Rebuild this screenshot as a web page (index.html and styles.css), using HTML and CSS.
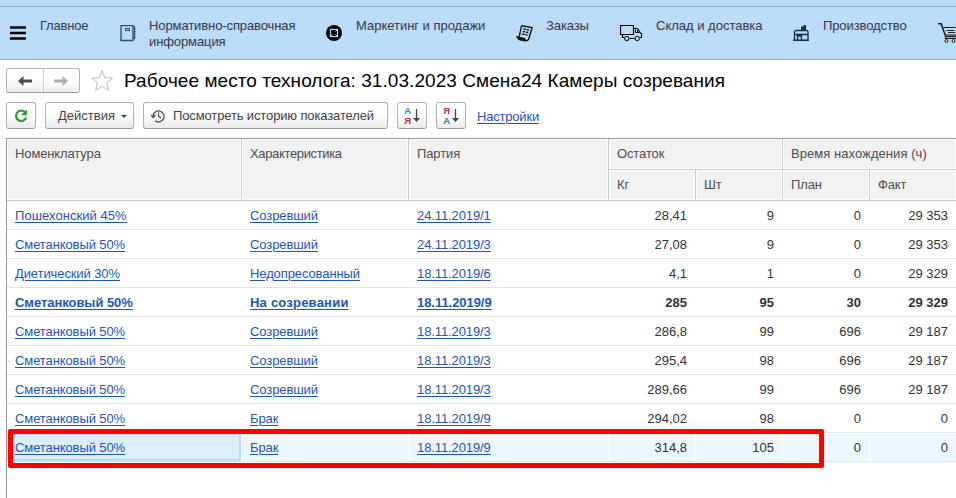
FILE: index.html
```html
<!DOCTYPE html>
<html lang="ru">
<head>
<meta charset="utf-8">
<title>Рабочее место технолога</title>
<link rel="stylesheet" href="styles.css">
</head>
<body>
<div class="strip"></div>
<nav class="sections">
  <svg class="burger" width="16" height="14" viewBox="0 0 16 14"><path d="M0 1.500h16M0 7h16M0 12.500h16" stroke="#000" stroke-width="2.600"/></svg>
  <span class="section s-main">Главное</span>
  <svg class="icon" width="16" height="18" viewBox="0 0 16 18" fill="none" stroke="#34495c"><path d="M1 7.500V15.500h12V7.500M1 8V.500h12V8" stroke-width="1.300"/><rect x="5.500" y="3.500" width="4" height="2"/><path d="M13 1.500h1.500v12.500H13" /><path d="M14.500 3.500h1M14.500 6.500h1M14.500 9.500h1M14.500 12.500h1" stroke-width="1.500"/></svg>
  <span class="section s-ref">Нормативно-справочная<br>информация</span>
  <svg class="icon" width="16" height="16" viewBox="0 0 16 16"><circle cx="8" cy="8" r="8" fill="#000"/><g fill="none" stroke="#badcf9"><rect x="4.500" y="4.500" width="7" height="7" stroke-width="1.200"/><path d="M9.500 6.500l2-2M5 11l1.500-1.500M11 11L9.500 9.500"/></g></svg>
  <span class="section s-sales">Маркетинг и продажи</span>
  <svg class="icon" width="17" height="17" viewBox="0 0 17 17" fill="none" stroke="#111"><path d="M5.500.8l10.700 1.700-3.400 11.200c-.5 1.700-1.700 2.200-3.200 1.700M5.500.8L3.200 11.800" stroke-width="1.400"/><path d="M.5 11.500l8.500 2 .7 2.700-7-1.500z" fill="#111"/><path d="M7.500 4l5.500 1M6.800 6.500l5.400 1M6.200 9l5.300 1" stroke-dasharray="2.500 .7" stroke-width="1.300"/></svg>
  <span class="section s-orders">Заказы</span>
  <svg class="icon" width="23" height="17" viewBox="0 0 23 17" fill="none" stroke="#000"><path d="M.5.500h13v9H.5zM2.500 9.500v3h2M9 13.500h6M13.500 3.500h4l2.500 4 1.500 1v4h-2" stroke-width="1.200"/><path d="M15.500 4.500v3h4M17.500 5v2"/><circle cx="6.800" cy="13.500" r="2.200"/><circle cx="17.200" cy="13.500" r="2.200"/></svg>
  <span class="section s-stock">Склад и доставка</span>
  <svg class="icon" width="16" height="16" viewBox="0 0 16 16" fill="none" stroke="#1c2d3b"><path d="M8 1.500h2.500V0H13v5H8z" fill="#1c2d3b" stroke="none"/><path d="M1.500 6.500L3 5.500h11l1 1v9H1.500zM1 9.500h14M4.500 15v-4h4v4" stroke-width="1.300"/><path d="M0 15.300h16" stroke-width="1.400"/></svg>
  <span class="section s-prod">Производство</span>
  <svg class="icon cart" width="22" height="20" viewBox="0 0 22 20" fill="none" stroke="#222"><path d="M0 .8h3.200l4.500 12.700h12" stroke-width="1.600"/><path d="M5.500 4.500h16L19.500 12H7.500M8.500 7.500h8M10 9.500h7"/><path d="M7.700 13.500L7 15.500h11"/><circle cx="8.500" cy="18" r="1.500"/><circle cx="15.500" cy="18" r="1.500"/></svg>
</nav>

<header class="heading">
  <div class="history">
    <span class="btn-half"><svg width="14" height="10" viewBox="0 0 14 10"><path d="M0 5l5.500-5v3.500H14v3H5.500V10z" fill="#4c4c4c"/></svg></span>
    <span class="btn-half"><svg width="14" height="10" viewBox="0 0 14 10"><path d="M14 5L8.500 0v3.500H0v3h8.500V10z" fill="#adadad"/></svg></span>
  </div>
  <svg class="star" width="24" height="23" viewBox="0 0 24 23"><path d="M12 1.500l2.800 7.300 7.700.3-6 4.900 2.100 7.500L12 17.300l-6.600 4.200L7.500 14l-6-4.900 7.700-.3z" fill="#fff" stroke="#b9bec4"/></svg>
  <h1>Рабочее место технолога: 31.03.2023 Смена24 Камеры созревания</h1>
</header>

<div class="toolbar">
  <button class="btn square"><svg width="14" height="14" viewBox="0 0 14 14"><path d="M10.800 3A5.200 5.200 0 1 0 12.200 8.500" fill="none" stroke="#2c9f36" stroke-width="2.200"/><path d="M13 .3v6H7z" fill="#2c9f36"/></svg></button>
  <button class="btn actions"><span>Действия</span><i class="caret"></i></button>
  <button class="btn log"><svg width="14" height="14" viewBox="0 0 14 14" fill="none" stroke="#4d4d4d" stroke-width="1.300"><path d="M2 7.500A5.500 5.500 0 1 1 4 11.700M7.500 3.500V7l2.500 2.300"/><path d="M0 6l2 2.500L4.300 6"/></svg><span>Посмотреть историю показателей</span></button>
  <button class="btn square"><span class="sort"><span class="letters"><b class="blue">А</b><b class="red">Я</b></span><svg width="7" height="14" viewBox="0 0 7 14"><path d="M3.500 0v10" stroke="#444" stroke-width="1.300"/><path d="M0 9h7l-3.500 4z" fill="#444"/></svg></span></button>
  <button class="btn square"><span class="sort"><span class="letters"><b class="red">Я</b><b class="blue">А</b></span><svg width="7" height="14" viewBox="0 0 7 14"><path d="M3.500 0v10" stroke="#444" stroke-width="1.300"/><path d="M0 9h7l-3.500 4z" fill="#444"/></svg></span></button>
  <a class="settings">Настройки</a>
</div>

<main class="grid">
  <div class="row head">
    <div class="th tall">Номенклатура</div><div class="th tall tight">Характеристика</div><div class="th tall">Партия</div>
    <div class="th wide">Остаток</div><div class="th wide"><span class="time">Время нахождения (ч)</span></div>
    <div class="th">Кг</div><div class="th">Шт</div><div class="th">План</div><div class="th">Факт</div>
  </div>
  <div class="row"><div><a class="wider">Пошехонский 45%</a></div><div><a>Созревший</a></div><div><a>24.11.2019/1</a></div><div>28,41</div><div>9</div><div>0</div><div>29 353</div></div>
  <div class="row"><div><a>Сметанковый 50%</a></div><div><a>Созревший</a></div><div><a>24.11.2019/3</a></div><div>27,08</div><div>9</div><div>0</div><div>29 353</div></div>
  <div class="row"><div><a>Диетический 30%</a></div><div><a>Недопресованный</a></div><div><a>18.11.2019/6</a></div><div>4,1</div><div>1</div><div>0</div><div>29 329</div></div>
  <div class="row bold"><div><a>Сметанковый 50%</a></div><div><a class="loose">На созревании</a></div><div><a>18.11.2019/9</a></div><div>285</div><div>95</div><div>30</div><div>29 329</div></div>
  <div class="row"><div><a>Сметанковый 50%</a></div><div><a>Созревший</a></div><div><a>18.11.2019/3</a></div><div>286,8</div><div>99</div><div>696</div><div>29 187</div></div>
  <div class="row"><div><a>Сметанковый 50%</a></div><div><a>Созревший</a></div><div><a>18.11.2019/3</a></div><div>295,4</div><div>98</div><div>696</div><div>29 187</div></div>
  <div class="row"><div><a>Сметанковый 50%</a></div><div><a>Созревший</a></div><div><a>18.11.2019/3</a></div><div>289,66</div><div>99</div><div>696</div><div>29 187</div></div>
  <div class="row"><div><a>Сметанковый 50%</a></div><div><a>Брак</a></div><div><a>18.11.2019/9</a></div><div>294,02</div><div>98</div><div>0</div><div>0</div></div>
  <div class="row selected"><div><a>Сметанковый 50%</a></div><div><a>Брак</a></div><div><a>18.11.2019/9</a></div><div>314,8</div><div>105</div><div>0</div><div>0</div><span class="marker"></span></div>
</main>
</body>
</html>
```
FILE: styles.css
```css
* { box-sizing: border-box; }
html, body { height: 100%; }
body {
  margin: 0;
  overflow: hidden;
  display: flex;
  flex-direction: column;
  background: #fff;
  color: #333;
  font: 13px/16px "Liberation Sans", Arial, sans-serif;
  letter-spacing: -0.1px;
}
svg { display: block; flex: none; }

.strip { height: 7px; flex: none; background: #badcf9; border-bottom: 1px solid #8aaccb; }
.sections {
  display: flex;
  flex: none;
  height: 53px;
  padding-left: 10px;
  background: #badcf9;
  border-bottom: 1px solid #8aaccb;
  color: #333745;
  white-space: nowrap;
}
.burger { margin-top: 19px; }
.icon { margin-top: 18px; }
.cart { margin-top: 16px; }
.section { padding-top: 11px; flex: none; }
.s-main { margin-left: 14px; width: 80px; letter-spacing: -0.2px; }
.s-ref { margin-left: 13px; width: 177px; }
.s-sales { margin-left: 14px; width: 160px; letter-spacing: -0.02px; }
.s-orders { margin-left: 13px; width: 74px; }
.s-stock { margin-left: 13px; width: 137px; letter-spacing: 0; }
.s-prod { margin-left: 14px; width: 115px; }

.heading { display: flex; flex: none; height: 42px; padding: 8px 0 0 6px; }
.history {
  display: flex;
  width: 74px;
  height: 25px;
  border: 1px solid #b3b3b3;
  border-bottom-color: #999;
  border-radius: 3px;
  background: linear-gradient(#fff 40%, #ededed);
}
.btn-half { flex: 1; display: flex; align-items: center; justify-content: center; }
.btn-half + .btn-half { border-left: 1px solid #ccc; }
.star { margin: 1px 0 0 10px; }
h1 { margin: 1px 0 0 10px; font-size: 19px; line-height: 24px; font-weight: normal; letter-spacing: 0.06px; color: #000; white-space: nowrap; }

.toolbar { display: flex; flex: none; gap: 9px; height: 36px; padding-left: 6px; }
.btn {
  display: flex;
  align-items: center;
  height: 27px;
  padding: 0;
  border: 1px solid #b3b3b3;
  border-bottom-color: #999;
  border-radius: 3px;
  background: linear-gradient(#fff 40%, #ebebeb);
  color: #444;
  font: inherit;
  letter-spacing: -0.13px;
  white-space: nowrap;
}
.square { width: 30px; justify-content: center; }
.actions { width: 89px; padding-left: 12px; letter-spacing: 0; }
.caret { margin: 2px 0 0 6px; border: 3px solid transparent; border-top-color: #444; border-bottom: 0; }
.log { width: 245px; padding-left: 7px; gap: 8px; }
.sort { display: flex; align-items: center; gap: 2px; }
.letters { display: flex; flex-direction: column; font-size: 9.500px; line-height: 10px; }
.letters b { font-weight: bold; }
.blue { color: #3783bd; }
.red { color: #bd3038; }
a { color: #1d56b4; text-decoration: underline; text-underline-offset: 2px; text-decoration-thickness: 1px; }
.settings { margin: 7px 0 0 2px; letter-spacing: -0.2px; }

.grid { flex: 1; margin-left: 6px; border: solid #9a9a9a; border-width: 1px 0 0 1px; }
.row {
  position: relative;
  display: grid;
  grid-template-columns: 235px 167px 200px 87px 87px 87px 87px;
  height: 29px;
  border-bottom: 1px solid #e4e4e4;
  line-height: 30px;
  white-space: nowrap;
}
.row > div { height: 28px; padding: 0 8px; }
.row > div:nth-child(n+4) { padding-right: 9px; text-align: right; letter-spacing: 0; }
.wider { letter-spacing: 0.04px; }
.bold { font-weight: bold; }
.bold a { letter-spacing: -0.05px; }
.bold .loose { letter-spacing: 0.22px; }
.head {
  grid-template-rows: 31px 31px;
  height: 62px;
  border-bottom: 0;
  color: #4d4d4d;
}
.head > .th, .head > .th:nth-child(n+4) {
  height: auto;
  text-align: left;
  letter-spacing: -0.12px;
  border: solid #c9c9c9;
  border-width: 0 1px 1px 0;
  background: #f1f1f1;
  box-shadow: inset 0 0 0 1px #fff;
}
.head > .tight { letter-spacing: -0.35px; }
.time { letter-spacing: 0.06px; }
.tall { grid-row: 1 / 3; }
.wide { grid-column: span 2; }
.row.selected > div { background: #edf5fd; border: solid #fff; border-width: 1px 1px 0 0; line-height: 28px; }
.row.selected > div:nth-child(n+4) { padding-right: 8px; }
.row.selected > div:first-child { margin-right: 1px; background: #dcedfc; border: 2px solid #b9daf7; padding-left: 6px; line-height: 26px; }
.marker {
  position: absolute;
  left: 1px;
  top: -4px;
  width: 816px;
  height: 39px;
  border: 5px solid #fe0000;
  border-radius: 2px;
}
```
